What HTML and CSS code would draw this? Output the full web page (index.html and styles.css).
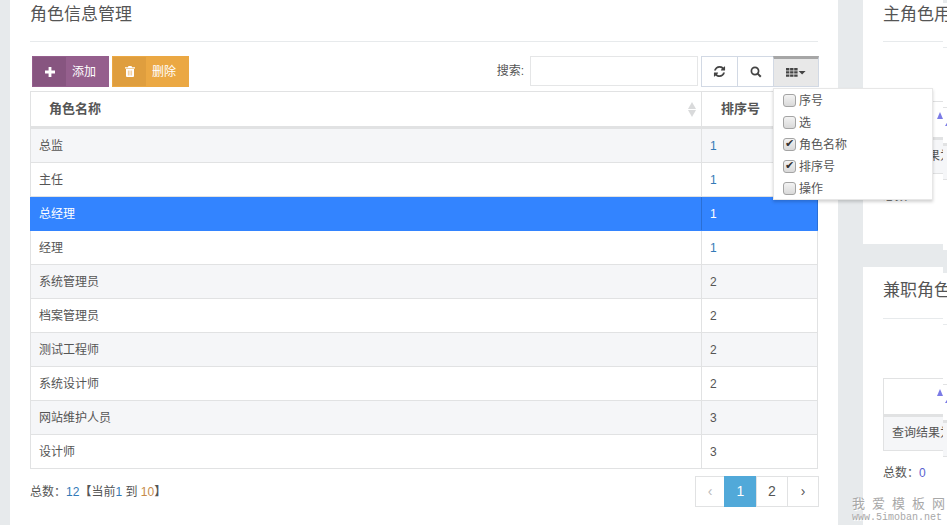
FILE: index.html
```html
<!DOCTYPE html>
<html lang="zh">
<head>
<meta charset="utf-8">
<title>角色信息管理</title>
<link rel="stylesheet" href="styles.css">
</head>
<body>
<div class="page">
  <main class="panel main">
    <h2 class="title">角色信息管理</h2>
    <div class="toolbar">
      <button class="act act-add"><span class="act-ico"><svg width="10" height="10" viewBox="0 0 10 10"><path d="M3.6 0h2.8v3.6H10v2.8H6.4V10H3.6V6.4H0V3.6h3.6z" fill="#fff"/></svg></span><span class="act-txt">添加</span></button>
      <button class="act act-del"><span class="act-ico"><svg width="10" height="11" viewBox="0 0 10 11"><path d="M3.5 0h3l.6 1.2H10v1.2H0V1.2h2.9zM1 3h8v7a1 1 0 0 1-1 1H2a1 1 0 0 1-1-1z" fill="#fff"/><path d="M3.4 4.5v5M5 4.5v5M6.6 4.5v5" stroke="#eeb568" stroke-width=".7"/></svg></span><span class="act-txt">删除</span></button>
      <div class="search">
        <label class="search-label">搜索:</label>
        <input class="search-input" type="text">
      </div>
      <div class="tools">
        <button class="tool tool-a"><svg width="13" height="13" viewBox="0 0 1792 1792"><path d="M1639 1056q0 5-1 7-64 268-268 434.5t-478 166.5q-146 0-282.5-55t-243.5-157l-129 129q-19 19-45 19t-45-19-19-45v-448q0-26 19-45t45-19h448q26 0 45 19t19 45-19 45l-137 137q71 66 161 102t187 36q134 0 250-65t186-179q11-17 53-117 8-23 30-23h192q13 0 22.5 9.5t9.5 22.5zm25-800v448q0 26-19 45t-45 19h-448q-26 0-45-19t-19-45 19-45l138-138q-148-137-349-137-134 0-250 65t-186 179q-11 17-53 117-8 23-30 23h-199q-13 0-22.5-9.5t-9.5-22.5v-7q65-268 270-434.5t480-166.5q146 0 284 55.5t245 156.5l130-129q19-19 45-19t45 19 19 45z" fill="#444"/></svg></button>
        <button class="tool tool-b"><svg width="12" height="12" viewBox="0 0 12 12"><circle cx="5" cy="5" r="3.6" fill="none" stroke="#444" stroke-width="1.7"/><path d="M7.6 7.6l3.2 3.2" stroke="#444" stroke-width="2"/></svg></button>
        <button class="tool tool-c"><svg width="20" height="9" viewBox="0 0 20 9"><path d="M0 0h3.4v2.4H0zM4.1 0h3.4v2.4H4.1zM8.2 0h3.4v2.4H8.2zM0 3.2h3.4v2.4H0zM4.1 3.2h3.4v2.4H4.1zM8.2 3.2h3.4v2.4H8.2zM0 6.4h3.4v2.4H0zM4.1 6.4h3.4v2.4H4.1zM8.2 6.4h3.4v2.4H8.2zM12.6 3h7l-3.5 3.6z" fill="#444"/></svg></button>
      </div>
    </div>
    <table class="grid">
      <thead>
        <tr><th class="col-name">角色名称<span class="sorter"><i class="up"></i><i class="down"></i></span></th><th class="col-num">排序号</th></tr>
      </thead>
      <tbody>
        <tr class="odd first"><td>总监</td><td class="link">1</td></tr>
        <tr><td>主任</td><td class="link">1</td></tr>
        <tr class="sel"><td>总经理</td><td>1</td></tr>
        <tr><td>经理</td><td class="link">1</td></tr>
        <tr class="odd"><td>系统管理员</td><td>2</td></tr>
        <tr><td>档案管理员</td><td>2</td></tr>
        <tr class="odd"><td>测试工程师</td><td>2</td></tr>
        <tr><td>系统设计师</td><td>2</td></tr>
        <tr class="odd"><td>网站维护人员</td><td>3</td></tr>
        <tr><td>设计师</td><td>3</td></tr>
      </tbody>
    </table>
    <div class="foot">
      <div class="info">总数：<span class="n-b">12</span><b class="brk">【</b>当前<span class="n-b">1</span> 到 <span class="n-a">10</span><b class="brk">】</b></div>
      <nav class="pager">
        <a class="pg pg-prev">‹</a><a class="pg pg-on">1</a><a class="pg pg-2">2</a><a class="pg pg-next">›</a>
      </nav>
    </div>
  </main>

  <aside class="side">
    <section class="panel mini mini-first">
      <h2 class="title">主角色用户</h2>
      <div class="mini-table mt-1">
        <div class="mini-head"><i class="tri"></i></div>
        <div class="mini-row">查询结果为空</div>
      </div>
      <div class="mini-total">总数：<span class="blue">0</span></div>
    </section>
    <section class="panel mini mini-second">
      <h2 class="title">兼职角色用户</h2>
      <div class="mini-table mt-2">
        <div class="mini-head"><i class="tri"></i></div>
        <div class="mini-row">查询结果为空</div>
      </div>
      <div class="mini-total">总数：<span class="blue">0</span></div>
    </section>
  </aside>

  <aside class="side ghost">
    <section class="panel strip strip-first">
      <div class="strip-rule"></div>
      <div class="mini-table mt-g1">
        <div class="mini-head"><i class="tri tri-g"></i></div>
        <div class="mini-row"></div>
      </div>
    </section>
    <section class="panel strip strip-second">
      <div class="strip-rule"></div>
      <div class="mini-table mt-g2">
        <div class="mini-head"><i class="tri tri-g"></i></div>
        <div class="mini-row"></div>
      </div>
    </section>
  </aside>
</div>

<div class="menu">
  <label class="menu-item"><input type="checkbox">序号</label>
  <label class="menu-item"><input type="checkbox">选</label>
  <label class="menu-item"><input type="checkbox" checked>角色名称</label>
  <label class="menu-item"><input type="checkbox" checked>排序号</label>
  <label class="menu-item"><input type="checkbox">操作</label>
</div>

<div class="mark">
  <div class="mark-a">我爱模板网</div>
  <div class="mark-b">www.5imoban.net</div>
</div>
</body>
</html>
```

FILE: styles.css
```css
* { box-sizing: border-box; }
html, body { margin: 0; height: 100%; overflow: hidden; }
body {
  background: #e7eaec;
  color: #555;
  font: 12px/1.4 "Liberation Sans", "Noto Sans CJK SC", sans-serif;
}
.page {
  display: flex;
  align-items: stretch;
  height: 525px;
  padding-left: 10px;
}
.panel { background: #fff; }
.main {
  flex: none;
  width: 828px;
  height: 525px;
  padding: 0 20px;
}
.title {
  margin: 0;
  height: 42px;
  padding-top: 3px;
  border-bottom: 1px solid #e7eaec;
  font-size: 17px;
  line-height: 24px;
  font-weight: 400;
  color: #555;
  white-space: nowrap;
}
.toolbar {
  display: flex;
  align-items: flex-start;
  margin-top: 14px;
  height: 35px;
  padding-left: 2px;
}
.act {
  display: flex;
  width: 77px;
  height: 31px;
  margin-right: 3px;
  padding: 1px;
  border: 0;
  color: #fff;
  font: inherit;
}
.act-add { background: #955f8d; }
.act-del { background: #eba843; }
.act-ico {
  display: flex;
  align-items: center;
  justify-content: center;
  width: 33px;
  height: 29px;
}
.act-add .act-ico { background: #875580; }
.act-del .act-ico { background: #df9e3e; }
.act-txt { padding: 1px 0 0 6px; line-height: 29px; }
.search { display: flex; align-items: center; margin-left: auto; height: 30px; }
.search-label { margin-right: 6px; }
.search-input {
  width: 168px;
  height: 30px;
  border: 1px solid #e5e6e7;
  background: #fff;
  outline: 0;
}
.tools { display: flex; margin-left: 3px; margin-right: -1px; height: 31px; }
.tool {
  display: flex;
  align-items: center;
  justify-content: center;
  height: 31px;
  padding: 0;
  background: #fff;
  border: 1px solid #d2d9e4;
  margin-left: -1px;
}
.tools .tool:first-child { margin-left: 0; }
.tool-a { width: 37px; }
.tool-b { width: 37px; }
.tool-c { width: 46px; background: #e8e8e8; border-top: 3px solid #a6a6a6; padding-bottom: 1px; }
.grid {
  width: 788px;
  border-collapse: collapse;
  table-layout: fixed;
  border: 1px solid #e1e2e3;
}
.grid th, .grid td { border: 1px solid #e1e2e3; padding: 0 8px; text-align: left; font-weight: 400; }
.grid th {
  height: 36px;
  border-bottom: 3px solid #e1e2e3;
  font-size: 13px;
  font-weight: 700;
  color: #555;
  position: relative;
}
.grid th.col-name { padding-left: 18px; }
.grid th.col-num { width: 116px; padding-left: 19px; }
.grid td { height: 34px; padding-top: 1px; font-size: 12px; }
.grid .first td { height: 35px; }
.odd { background: #f5f6f8; }
.link { color: #337ab7; }
.sel { background: #3384ff; color: #fff; }
.grid .sel td { border-color: #3384ff; border-right-color: #2a6fd6; }
.sorter {
  position: absolute;
  right: 5px;
  top: 10px;
  display: flex;
  flex-direction: column;
  gap: 1px;
}
.up, .down { display: block; width: 0; height: 0; border-left: 4px solid transparent; border-right: 4px solid transparent; }
.up { border-bottom: 7px solid #d9dadb; }
.down { border-top: 7px solid #d9dadb; }
.foot { display: flex; justify-content: space-between; align-items: flex-start; margin-top: 7px; }
.info { padding-top: 8px; line-height: 17px; color: #555; }
.n-a { color: #c58a4a; }
.n-b { color: #337ab7; }
.brk { font-weight: 700; }
.pager { display: flex; margin-right: -1px; height: 31px; }
.pg {
  display: flex;
  align-items: center;
  justify-content: center;
  height: 31px;
  border: 1px solid #e1e2e3;
  margin-left: -1px;
  font-size: 14px;
  color: #555;
}
.pager .pg:first-child { margin-left: 0; }
.pg-prev { width: 30px; color: #bbb; }
.pg-on { width: 33px; background: #51a9d9; border-color: #51a9d9; color: #fff; }
.pg-2 { width: 32px; }
.pg-next { width: 32px; }

.side { flex: none; width: 80px; margin-left: 25px; position: relative; z-index: 1; }
.mini { width: 80px; padding-left: 20px; }
.mini-first { height: 244px; }
.mini-second { height: 258px; margin-top: 23px; padding-top: 11px; }
.mini .title { width: 60px; }
.mini-second .title { height: 41px; padding-top: 1px; }
.mini-table { border: 1px solid #e1e2e3; border-right: 0; }
.mt-1 { margin-top: 59px; }
.mt-2 { margin-top: 59px; }
.mini-head { height: 38px; border-bottom: 3px solid #e1e2e3; position: relative; }
.mini-row {
  height: 33px;
  padding-left: 8px;
  line-height: 33px;
  background: #f5f6f8;
  white-space: nowrap;
  overflow: hidden;
}
.mini-total { margin-top: 14px; line-height: 17px; white-space: nowrap; color: #555; }
.blue { color: #5a5fd0; }
.tri {
  position: absolute;
  right: 0;
  top: 10px;
  width: 0;
  height: 0;
  border-left: 3.5px solid transparent;
  border-right: 3.5px solid transparent;
  border-bottom: 7px solid #7b7be6;
}

.ghost { width: 4px; margin-left: 0; padding-top: 3px; z-index: 0; }
.strip { width: 4px; overflow: hidden; }
.strip-first { height: 247px; padding-top: 44px; }
.strip-second { height: 252px; margin-top: 23px; padding-top: 51px; }
.strip-rule { height: 1px; background: #e7eaec; }
.strip .mini-table { border-left: 0; }
.mt-g1 { margin-top: 59px; }
.mt-g2 { margin-top: 59px; }
.tri-g { left: 2px; right: auto; top: 13px; border-bottom-width: 5px; }

.menu {
  position: absolute;
  left: 773px;
  top: 88px;
  width: 160px;
  height: 112px;
  padding: 1px 10px;
  background: #fff;
  border: 1px solid #e7e7e7;
  box-shadow: 0 2px 3px rgba(0, 0, 0, .18);
  z-index: 5;
}
.menu-item { display: flex; align-items: center; height: 22px; font-size: 12px; color: #555; }
.menu-item input {
  appearance: none;
  -webkit-appearance: none;
  width: 13px;
  height: 13px;
  margin: -1px 3px 0 -1px;
  border: 1px solid #a4a4a4;
  border-radius: 3px;
  background: linear-gradient(#f3f3f3, #d9d9d9);
  position: relative;
  flex: none;
}
.menu-item input:checked::after {
  content: "✔";
  position: absolute;
  left: 1px;
  top: -2px;
  font: 11px/13px "DejaVu Sans", sans-serif;
  color: #333;
}
.mark {
  position: absolute;
  left: 850px;
  top: 496px;
  width: 97px;
  color: #a8a8a8;
  text-shadow: 1px 1px 0 #fff;
  z-index: 6;
}
.mark-a { font-size: 13px; line-height: 15px; letter-spacing: 7px; padding-left: 2px; white-space: nowrap; }
.mark-b { font: 10px/13px "Liberation Mono", monospace; white-space: nowrap; padding-left: 2px; }
```
